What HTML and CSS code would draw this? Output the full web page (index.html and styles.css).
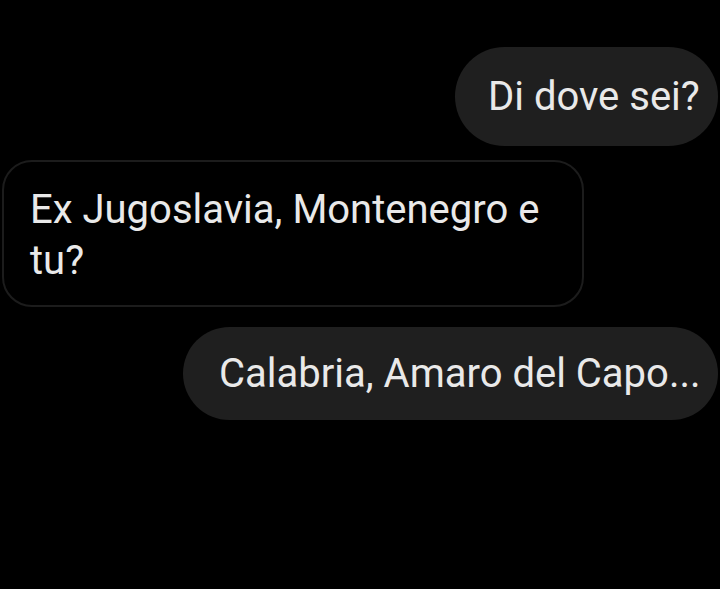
FILE: index.html
```html
<!DOCTYPE html>
<html lang="it">
<head>
  <meta charset="UTF-8" />
  <meta name="viewport" content="width=device-width, initial-scale=1.0"/>
  <title>Chat</title>
  <link rel="stylesheet" href="styles.css">
</head>
<body>

  <div class="chat">
    <div class="msg sent first">Di dove sei?</div>
    <div class="msg received">Ex Jugoslavia, Montenegro e<br>tu?</div>
    <div class="msg sent last">Calabria, Amaro del Capo...</div>
  </div>

</body>
</html>
```

FILE: styles.css
```css
* {
  box-sizing: border-box;
}

html, body {
  height: 100%;
}

body {
  margin: 0;
  background-color: #000;
  font-family: 'Roboto', sans-serif;
  color: #e9e9e9;
  overflow: hidden;
}

.chat {
  display: flex;
  flex-direction: column;
  padding-top: 47px;
}

.msg {
  font-size: 40px;
  line-height: 51px;
}

.sent {
  align-self: flex-end;
  background-color: #1f1f1f;
  border-radius: 50px;
  display: flex;
  align-items: center;
  margin-right: 2px;
}

.first {
  width: 263px;
  height: 99px;
  padding-left: 33px;
}

.last {
  width: 535px;
  height: 93px;
  margin-top: 20px;
  padding-left: 36px;
}

.received {
  align-self: flex-start;
  margin: 14px 0 0 2px;
  width: 582px;
  height: 147px;
  border: 2px solid #1c1c1c;
  border-radius: 30px;
  padding: 22px 20px 0 26px;
}
```
